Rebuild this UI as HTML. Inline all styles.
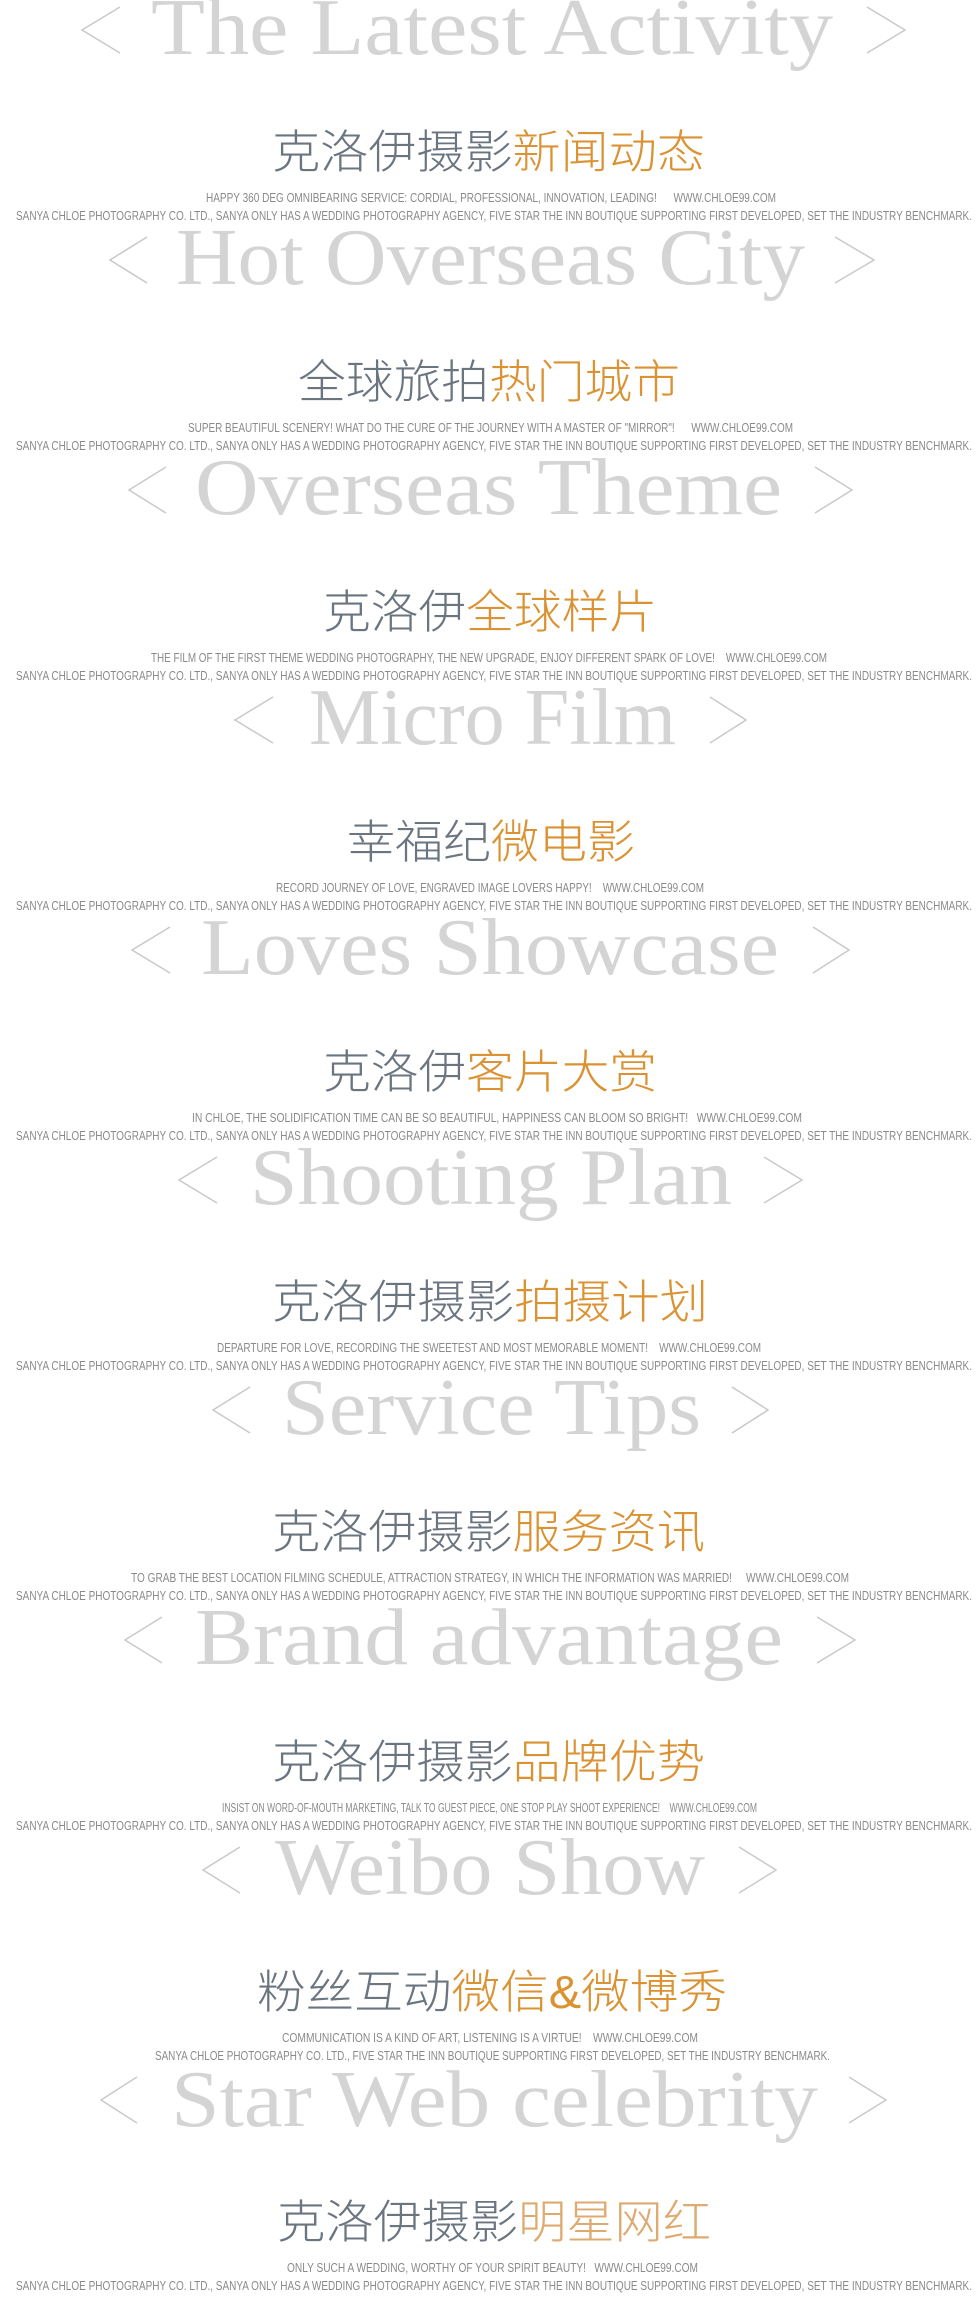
<!DOCTYPE html>
<html><head><meta charset="utf-8"><style>
html,body{margin:0;padding:0;background:#fff;width:980px;height:2300px;overflow:hidden}
svg{display:block}
text{white-space:pre}
.en{font-family:"Liberation Serif",serif;font-size:80px;fill:#d4d4d4}
.ch{font-family:"Liberation Sans","Noto Sans CJK SC",sans-serif;font-size:46px;font-weight:300}
.g{fill:#6b7580}.o{fill:#da9233}.o2{fill:#deaa70}
.s{font-family:"Liberation Sans",sans-serif;font-size:12.5px;fill:#8a8a8a}
.cv{fill:none;stroke:#c9c9c9;stroke-width:1.5}
</style></head><body>
<svg width="980" height="2300" xmlns="http://www.w3.org/2000/svg" xml:space="preserve">
<!-- 1 -->
<g transform="translate(0,0)">
<polyline class="cv" points="120,7 82,30 120,53"/><polyline class="cv" points="867,7 905,30 867,53"/>
<text class="en" x="151" y="54" textLength="682" lengthAdjust="spacingAndGlyphs">The Latest Activity</text>
<text class="ch" x="272" y="168" textLength="433" lengthAdjust="spacingAndGlyphs"><tspan class="g">克洛伊摄影</tspan><tspan class="o">新闻动态</tspan></text>
<text class="s" x="206" y="202" textLength="570" lengthAdjust="spacingAndGlyphs">HAPPY 360 DEG OMNIBEARING SERVICE: CORDIAL, PROFESSIONAL, INNOVATION, LEADING!      WWW.CHLOE99.COM</text>
<text class="s" x="16" y="220" textLength="956" lengthAdjust="spacingAndGlyphs">SANYA CHLOE PHOTOGRAPHY CO. LTD., SANYA ONLY HAS A WEDDING PHOTOGRAPHY AGENCY, FIVE STAR THE INN BOUTIQUE SUPPORTING FIRST DEVELOPED, SET THE INDUSTRY BENCHMARK.</text>
</g>
<!-- 2 -->
<g transform="translate(0,230)">
<polyline class="cv" points="147,7 110,30 147,53"/><polyline class="cv" points="835,7 874,30 835,53"/>
<text class="en" x="176" y="54" textLength="629" lengthAdjust="spacingAndGlyphs">Hot Overseas City</text>
<text class="ch" x="298" y="168" textLength="382" lengthAdjust="spacingAndGlyphs"><tspan class="g">全球旅拍</tspan><tspan class="o">热门城市</tspan></text>
<text class="s" x="188" y="202" textLength="605" lengthAdjust="spacingAndGlyphs">SUPER BEAUTIFUL SCENERY! WHAT DO THE CURE OF THE JOURNEY WITH A MASTER OF "MIRROR"!      WWW.CHLOE99.COM</text>
<text class="s" x="16" y="220" textLength="956" lengthAdjust="spacingAndGlyphs">SANYA CHLOE PHOTOGRAPHY CO. LTD., SANYA ONLY HAS A WEDDING PHOTOGRAPHY AGENCY, FIVE STAR THE INN BOUTIQUE SUPPORTING FIRST DEVELOPED, SET THE INDUSTRY BENCHMARK.</text>
</g>
<!-- 3 -->
<g transform="translate(0,460)">
<polyline class="cv" points="166,7 129,30 166,53"/><polyline class="cv" points="815,7 852,30 815,53"/>
<text class="en" x="195" y="54" textLength="587" lengthAdjust="spacingAndGlyphs">Overseas Theme</text>
<text class="ch" x="323" y="168" textLength="334" lengthAdjust="spacingAndGlyphs"><tspan class="g">克洛伊</tspan><tspan class="o">全球样片</tspan></text>
<text class="s" x="151" y="202" textLength="676" lengthAdjust="spacingAndGlyphs">THE FILM OF THE FIRST THEME WEDDING PHOTOGRAPHY, THE NEW UPGRADE, ENJOY DIFFERENT SPARK OF LOVE!    WWW.CHLOE99.COM</text>
<text class="s" x="16" y="220" textLength="956" lengthAdjust="spacingAndGlyphs">SANYA CHLOE PHOTOGRAPHY CO. LTD., SANYA ONLY HAS A WEDDING PHOTOGRAPHY AGENCY, FIVE STAR THE INN BOUTIQUE SUPPORTING FIRST DEVELOPED, SET THE INDUSTRY BENCHMARK.</text>
</g>
<!-- 4 -->
<g transform="translate(0,690)">
<polyline class="cv" points="273,7 235,30 273,53"/><polyline class="cv" points="710,7 746,30 710,53"/>
<text class="en" x="309" y="54" textLength="367" lengthAdjust="spacingAndGlyphs">Micro Film</text>
<text class="ch" x="347" y="168" textLength="288" lengthAdjust="spacingAndGlyphs"><tspan class="g">幸福纪</tspan><tspan class="o">微电影</tspan></text>
<text class="s" x="276" y="202" textLength="428" lengthAdjust="spacingAndGlyphs">RECORD JOURNEY OF LOVE, ENGRAVED IMAGE LOVERS HAPPY!    WWW.CHLOE99.COM</text>
<text class="s" x="16" y="220" textLength="956" lengthAdjust="spacingAndGlyphs">SANYA CHLOE PHOTOGRAPHY CO. LTD., SANYA ONLY HAS A WEDDING PHOTOGRAPHY AGENCY, FIVE STAR THE INN BOUTIQUE SUPPORTING FIRST DEVELOPED, SET THE INDUSTRY BENCHMARK.</text>
</g>
<!-- 5 -->
<g transform="translate(0,920)">
<polyline class="cv" points="170,7 132,30 170,53"/><polyline class="cv" points="813,7 849,30 813,53"/>
<text class="en" x="201" y="54" textLength="578" lengthAdjust="spacingAndGlyphs">Loves Showcase</text>
<text class="ch" x="323" y="168" textLength="334" lengthAdjust="spacingAndGlyphs"><tspan class="g">克洛伊</tspan><tspan class="o">客片大赏</tspan></text>
<text class="s" x="192" y="202" textLength="610" lengthAdjust="spacingAndGlyphs">IN CHLOE, THE SOLIDIFICATION TIME CAN BE SO BEAUTIFUL, HAPPINESS CAN BLOOM SO BRIGHT!   WWW.CHLOE99.COM</text>
<text class="s" x="16" y="220" textLength="956" lengthAdjust="spacingAndGlyphs">SANYA CHLOE PHOTOGRAPHY CO. LTD., SANYA ONLY HAS A WEDDING PHOTOGRAPHY AGENCY, FIVE STAR THE INN BOUTIQUE SUPPORTING FIRST DEVELOPED, SET THE INDUSTRY BENCHMARK.</text>
</g>
<!-- 6 -->
<g transform="translate(0,1150)">
<polyline class="cv" points="217,7 179,30 217,53"/><polyline class="cv" points="764,7 802,30 764,53"/>
<text class="en" x="250" y="54" textLength="482" lengthAdjust="spacingAndGlyphs">Shooting Plan</text>
<text class="ch" x="272" y="168" textLength="436" lengthAdjust="spacingAndGlyphs"><tspan class="g">克洛伊摄影</tspan><tspan class="o">拍摄计划</tspan></text>
<text class="s" x="217" y="202" textLength="544" lengthAdjust="spacingAndGlyphs">DEPARTURE FOR LOVE, RECORDING THE SWEETEST AND MOST MEMORABLE MOMENT!    WWW.CHLOE99.COM</text>
<text class="s" x="16" y="220" textLength="956" lengthAdjust="spacingAndGlyphs">SANYA CHLOE PHOTOGRAPHY CO. LTD., SANYA ONLY HAS A WEDDING PHOTOGRAPHY AGENCY, FIVE STAR THE INN BOUTIQUE SUPPORTING FIRST DEVELOPED, SET THE INDUSTRY BENCHMARK.</text>
</g>
<!-- 7 -->
<g transform="translate(0,1380)">
<polyline class="cv" points="250,7 213,30 250,53"/><polyline class="cv" points="732,7 768,30 732,53"/>
<text class="en" x="282" y="54" textLength="419" lengthAdjust="spacingAndGlyphs">Service Tips</text>
<text class="ch" x="272" y="168" textLength="433" lengthAdjust="spacingAndGlyphs"><tspan class="g">克洛伊摄影</tspan><tspan class="o">服务资讯</tspan></text>
<text class="s" x="131" y="202" textLength="718" lengthAdjust="spacingAndGlyphs">TO GRAB THE BEST LOCATION FILMING SCHEDULE, ATTRACTION STRATEGY, IN WHICH THE INFORMATION WAS MARRIED!     WWW.CHLOE99.COM</text>
<text class="s" x="16" y="220" textLength="956" lengthAdjust="spacingAndGlyphs">SANYA CHLOE PHOTOGRAPHY CO. LTD., SANYA ONLY HAS A WEDDING PHOTOGRAPHY AGENCY, FIVE STAR THE INN BOUTIQUE SUPPORTING FIRST DEVELOPED, SET THE INDUSTRY BENCHMARK.</text>
</g>
<!-- 8 -->
<g transform="translate(0,1610)">
<polyline class="cv" points="162,7 125,30 162,53"/><polyline class="cv" points="817,7 855,30 817,53"/>
<text class="en" x="195" y="54" textLength="588" lengthAdjust="spacingAndGlyphs">Brand advantage</text>
<text class="ch" x="272" y="168" textLength="433" lengthAdjust="spacingAndGlyphs"><tspan class="g">克洛伊摄影</tspan><tspan class="o">品牌优势</tspan></text>
<text class="s" x="222" y="202" textLength="535" lengthAdjust="spacingAndGlyphs">INSIST ON WORD-OF-MOUTH MARKETING, TALK TO GUEST PIECE, ONE STOP PLAY SHOOT EXPERIENCE!    WWW.CHLOE99.COM</text>
<text class="s" x="16" y="220" textLength="956" lengthAdjust="spacingAndGlyphs">SANYA CHLOE PHOTOGRAPHY CO. LTD., SANYA ONLY HAS A WEDDING PHOTOGRAPHY AGENCY, FIVE STAR THE INN BOUTIQUE SUPPORTING FIRST DEVELOPED, SET THE INDUSTRY BENCHMARK.</text>
</g>
<!-- 9 -->
<g transform="translate(0,1840)">
<polyline class="cv" points="240,7 203,30 240,53"/><polyline class="cv" points="739,7 776,30 739,53"/>
<text class="en" x="275" y="54" textLength="430" lengthAdjust="spacingAndGlyphs">Weibo Show</text>
<text class="ch" x="257" y="168" textLength="470" lengthAdjust="spacingAndGlyphs"><tspan class="g">粉丝互动</tspan><tspan class="o">微信&amp;微博秀</tspan></text>
<text class="s" x="282" y="202" textLength="416" lengthAdjust="spacingAndGlyphs">COMMUNICATION IS A KIND OF ART, LISTENING IS A VIRTUE!    WWW.CHLOE99.COM</text>
<text class="s" x="155" y="220" textLength="675" lengthAdjust="spacingAndGlyphs">SANYA CHLOE PHOTOGRAPHY CO. LTD., FIVE STAR THE INN BOUTIQUE SUPPORTING FIRST DEVELOPED, SET THE INDUSTRY BENCHMARK.</text>
</g>
<!-- 10 -->
<g transform="translate(0,2070)">
<polyline class="cv" points="137,7 101,30 137,53"/><polyline class="cv" points="849,7 886,30 849,53"/>
<text class="en" x="171" y="56" textLength="647" lengthAdjust="spacingAndGlyphs">Star Web celebrity</text>
<text class="ch" x="277" y="168" textLength="434" lengthAdjust="spacingAndGlyphs"><tspan class="g">克洛伊摄影</tspan><tspan class="o2">明星网红</tspan></text>
<text class="s" x="287" y="202" textLength="411" lengthAdjust="spacingAndGlyphs">ONLY SUCH A WEDDING, WORTHY OF YOUR SPIRIT BEAUTY!   WWW.CHLOE99.COM</text>
<text class="s" x="16" y="220" textLength="956" lengthAdjust="spacingAndGlyphs">SANYA CHLOE PHOTOGRAPHY CO. LTD., SANYA ONLY HAS A WEDDING PHOTOGRAPHY AGENCY, FIVE STAR THE INN BOUTIQUE SUPPORTING FIRST DEVELOPED, SET THE INDUSTRY BENCHMARK.</text>
</g>
</svg>
</body></html>
